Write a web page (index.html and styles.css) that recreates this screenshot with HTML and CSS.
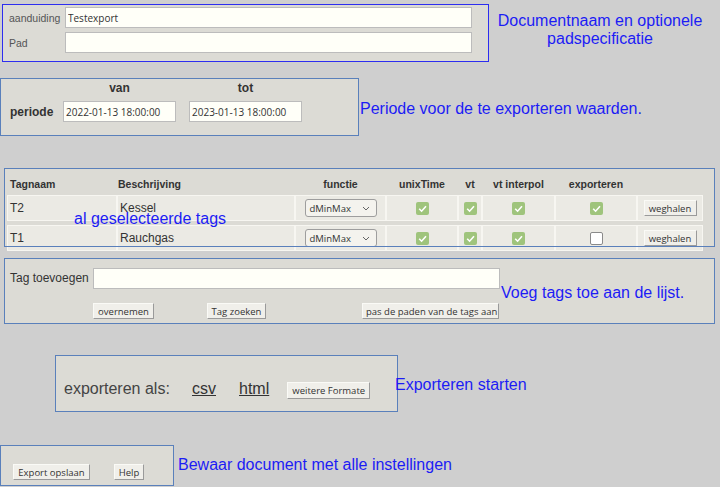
FILE: index.html
```html
<!DOCTYPE html>
<html>
<head>
<meta charset="utf-8">
<link rel="stylesheet" href="styles.css">
</head>
<body>
<div class="row r1">
  <div class="panel p1">
    <span class="lbl">aanduiding</span><input class="inp" type="text" value="Testexport">
    <span class="lbl">Pad</span><input class="inp" type="text" value="">
  </div>
  <div class="cap cap1">Documentnaam en optionele padspecificatie</div>
</div>

<div class="row r2">
  <div class="panel p2">
    <span></span><span class="colh">van</span><span class="colh">tot</span>
    <span class="plabel">periode</span><input class="inp" type="text" value="2022-01-13 18:00:00"><input class="inp" type="text" value="2023-01-13 18:00:00">
  </div>
  <div class="cap cap2">Periode voor de te exporteren waarden.</div>
</div>

<div class="panel p3">
  <table class="tags">
    <colgroup>
      <col style="width:110px"><col style="width:178px"><col style="width:91px"><col style="width:72px"><col style="width:24px"><col style="width:73px"><col style="width:82px"><col style="width:66px">
    </colgroup>
    <thead>
      <tr><th class="l1">Tagnaam</th><th class="l2">Beschrijving</th><th>functie</th><th>unixTime</th><th>vt</th><th>vt interpol</th><th>exporteren</th><th></th></tr>
    </thead>
    <tbody>
      <tr>
        <td class="l">T2</td><td class="l">Kessel</td>
        <td><span class="sel">dMinMax<svg width="8" height="5" viewBox="0 0 8 5"><path d="M1 1 L4 4 L7 1" fill="none" stroke="#666" stroke-width="1"/></svg></span></td>
        <td><span class="cb on"><svg width="13" height="13" viewBox="0 0 13 13"><path d="M3.2 6.8 L5.6 9.2 L10 4.2" fill="none" stroke="#fff" stroke-width="1.6"/></svg></span></td>
        <td><span class="cb on"><svg width="13" height="13" viewBox="0 0 13 13"><path d="M3.2 6.8 L5.6 9.2 L10 4.2" fill="none" stroke="#fff" stroke-width="1.6"/></svg></span></td>
        <td><span class="cb on"><svg width="13" height="13" viewBox="0 0 13 13"><path d="M3.2 6.8 L5.6 9.2 L10 4.2" fill="none" stroke="#fff" stroke-width="1.6"/></svg></span></td>
        <td><span class="cb on"><svg width="13" height="13" viewBox="0 0 13 13"><path d="M3.2 6.8 L5.6 9.2 L10 4.2" fill="none" stroke="#fff" stroke-width="1.6"/></svg></span></td>
        <td><button class="btn bw">weghalen</button></td>
      </tr>
      <tr>
        <td class="l">T1</td><td class="l">Rauchgas</td>
        <td><span class="sel">dMinMax<svg width="8" height="5" viewBox="0 0 8 5"><path d="M1 1 L4 4 L7 1" fill="none" stroke="#666" stroke-width="1"/></svg></span></td>
        <td><span class="cb on"><svg width="13" height="13" viewBox="0 0 13 13"><path d="M3.2 6.8 L5.6 9.2 L10 4.2" fill="none" stroke="#fff" stroke-width="1.6"/></svg></span></td>
        <td><span class="cb on"><svg width="13" height="13" viewBox="0 0 13 13"><path d="M3.2 6.8 L5.6 9.2 L10 4.2" fill="none" stroke="#fff" stroke-width="1.6"/></svg></span></td>
        <td><span class="cb on"><svg width="13" height="13" viewBox="0 0 13 13"><path d="M3.2 6.8 L5.6 9.2 L10 4.2" fill="none" stroke="#fff" stroke-width="1.6"/></svg></span></td>
        <td><span class="cb off"></span></td>
        <td><button class="btn bw">weghalen</button></td>
      </tr>
    </tbody>
  </table>
  <div class="cap tagnote">al geselecteerde tags</div>
</div>

<div class="panel p4">
  <div class="p4line">
    <span class="tlabel">Tag toevoegen</span><input class="inp" type="text" value="">
    <span class="cap cap4">Voeg tags toe aan de lijst.</span>
  </div>
  <div class="p4btns">
    <button class="btn b1">overnemen</button>
    <button class="btn b2">Tag zoeken</button>
    <button class="btn b3">pas de paden van de tags aan</button>
  </div>
</div>

<div class="row r5">
  <div class="panel p5">
    <span class="explabel">exporteren als:</span>
    <span class="link lcsv">csv</span>
    <span class="link lhtml">html</span>
    <button class="btn b5">weitere Formate</button>
  </div>
  <div class="cap cap5">Exporteren starten</div>
</div>

<div class="row r6">
  <div class="panel p6">
    <button class="btn b6">Export opslaan</button>
    <button class="btn b7">Help</button>
  </div>
  <div class="cap cap6">Bewaar document met alle instellingen</div>
</div>
</body>
</html>
```

FILE: styles.css
```css
* { box-sizing: border-box; }

body {
  margin: 0;
  width: 720px;
  height: 487px;
  overflow: hidden;
  background: #cfcfcf;
  font-family: "Liberation Sans", Arial, sans-serif;
  color: #444;
}

.row { display: flex; align-items: flex-start; }

.panel {
  flex: none;
  background: #dcdbd5;
  border: 1px solid #5a80bb;
}

.cap {
  flex: none;
  color: #1c1cf5;
  font-size: 16px;
  line-height: 18px;
  white-space: nowrap;
}

.inp {
  margin: 0;
  height: 21px;
  padding: 0 2px;
  border: 1px solid #bcbcbc;
  background: #fffff8;
  font-family: "Open Sans", sans-serif;
  font-size: 10px;
  color: #333;
  outline: none;
}

.btn {
  margin: 0;
  height: 16px;
  padding: 0 3px;
  font-family: "Open Sans", sans-serif;
  font-size: 9.5px;
  line-height: 13px;
  color: #333;
  background: #f0efea;
  border: 1px solid;
  border-color: #fafaf6 #9a9a9a #9a9a9a #fafaf6;
  border-radius: 0;
  white-space: nowrap;
}

/* section 1 */
.r1 { padding: 4px 0 0 2px; }
.p1 {
  width: 487px;
  height: 58px;
  border-color: #2d2df0;
  display: grid;
  grid-template-columns: 62px 407px;
  row-gap: 4px;
  align-content: start;
  align-items: center;
  padding-top: 2px;
}
.lbl { padding-left: 6px; font-size: 10.5px; color: #555; }
.p1 .inp { width: 407px; }
.cap1 { width: 222px; text-align: center; white-space: normal; margin-top: 8px; }

/* section 2 */
.r2 { margin-top: 16px; }
.p2 {
  width: 359px;
  height: 58px;
  display: grid;
  grid-template-columns: 49px 113px 113px;
  column-gap: 13px;
  row-gap: 6px;
  align-content: start;
  align-items: center;
  padding-top: 2px;
}
.colh { font-weight: bold; font-size: 12px; line-height: 14px; text-align: center; color: #333; }
.plabel { padding-left: 9px; font-weight: bold; font-size: 12px; color: #333; white-space: nowrap; }
.p2 .inp { width: 113px; }
.cap2 { margin: 22px 0 0 1px; }

/* section 3 */
.p3 {
  position: relative;
  margin: 32px 0 0 4px;
  width: 711px;
  height: 79px;
  border: none;
  padding: 5px 0 0 3px;
}
.p3::after {
  content: "";
  position: absolute;
  inset: 0;
  border: 1px solid #5a80bb;
  pointer-events: none;
}
.tags {
  border-collapse: separate;
  border-spacing: 0 4px;
  table-layout: fixed;
  width: 696px;
  margin-top: -4px;
  position: relative;
  top: 4px;
}
.tags th {
  height: 14px;
  padding: 0;
  font-size: 10.5px;
  line-height: 14px;
  font-weight: bold;
  color: #333;
  text-align: center;
  white-space: nowrap;
}
.tags th.l1 { text-align: left; padding-left: 3px; }
.tags th.l2 { text-align: left; padding-left: 1px; }
.tags td {
  height: 26px;
  padding: 0;
  background: #ebeae4;
  border: 1px solid #f7f6f1;
  font-size: 12px;
  color: #333;
  text-align: center;
  vertical-align: middle;
}
.tags td.l { text-align: left; padding-left: 2px; }

.sel {
  display: inline-flex;
  align-items: center;
  justify-content: space-between;
  width: 72px;
  height: 18px;
  padding: 0 6px 0 4px;
  border: 1px solid #9e9e9e;
  border-radius: 3px;
  background: #f4f3ee;
  font-family: "Open Sans", sans-serif;
  font-size: 9.5px;
  color: #333;
  vertical-align: middle;
}

.cb {
  display: inline-block;
  width: 13px;
  height: 13px;
  border-radius: 2px;
  vertical-align: middle;
}
.cb svg { display: block; }
.cb.on { background: #9fc47c; }
.cb.off { background: #fff; border: 1px solid #8a8a8a; }

.bw { width: 53px; }

.tagnote { position: absolute; left: 70px; top: 42px; }

/* section 4 */
.p4 {
  margin: 11px 0 0 4px;
  width: 711px;
  height: 66px;
  padding: 9px 0 0 5px;
}
.p4line { display: flex; align-items: flex-start; height: 35px; }
.tlabel { width: 83px; font-size: 12px; line-height: 21px; color: #333; white-space: nowrap; }
.p4 .inp { width: 407px; }
.cap4 { margin: 16px 0 0 1px; }
.p4btns { display: flex; padding-left: 83px; }
.b1 { width: 61px; }
.b2 { width: 59px; margin-left: 53px; }
.b3 { width: 137px; margin-left: 96px; }

/* section 5 */
.r5 { margin-top: 31px; padding-left: 55px; }
.p5 {
  width: 343px;
  height: 57px;
  display: flex;
  align-items: center;
  padding: 10px 0 0 8px;
}
.explabel { width: 128px; font-size: 16px; color: #444; white-space: nowrap; }
.link { font-size: 16px; color: #333; text-decoration: underline; }
.lhtml { margin-left: 23px; }
.b5 { width: 83px; height: 17px; margin-left: 18px; margin-top: 3px; }
.cap5 { margin: 21px 0 0 -3px; }

/* section 6 */
.r6 { margin-top: 33px; }
.p6 {
  width: 174px;
  height: 41px;
  display: flex;
  align-items: flex-start;
  padding: 18px 0 0 12px;
}
.b6 { width: 77px; }
.b7 { width: 30px; margin-left: 24px; }
.cap6 { margin: 11px 0 0 4px; }
```
